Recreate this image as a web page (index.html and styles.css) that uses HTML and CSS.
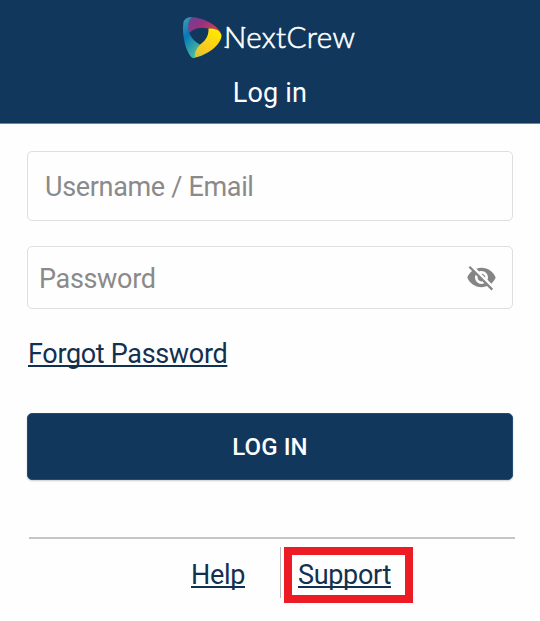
FILE: index.html
```html
<!DOCTYPE html>
<html lang="en">
<head>
<meta charset="utf-8">
<title>NextCrew</title>
<link rel="stylesheet" href="styles.css">
</head>
<body>
<header class="header">
  <div class="brand">
    <svg class="mark" viewBox="0 0 39 42" width="39" height="42">
      <defs>
        <linearGradient id="blue" x1="0" y1="0" x2="0.5" y2="1"><stop offset="0" stop-color="#4a9db0"/><stop offset=".45" stop-color="#0878b8"/><stop offset="1" stop-color="#45b8a0"/></linearGradient>
        <linearGradient id="pink" x1="0" y1="0" x2="1" y2="0.5"><stop offset="0" stop-color="#5d4a92"/><stop offset=".5" stop-color="#983082"/><stop offset="1" stop-color="#d0404c"/></linearGradient>
        <linearGradient id="gold" x1="0" y1="1" x2="0.6" y2="0"><stop offset="0" stop-color="#b9cc42"/><stop offset=".4" stop-color="#f9c821"/><stop offset="1" stop-color="#ffe600"/></linearGradient>
      </defs>
      <path fill="url(#pink)" d="M6 .5C15-1 33 6 38 16C34 12 30 11.500 25.500 11.500C18 10 11 11 6.500 16C4 11 3 4 6 .5Z"/>
      <path fill="url(#gold)" d="M25.500 11.500C32 11 37 13 38.500 18C39 27 24 39 10 41C11 36 13 31 16.500 28C21 25 26 20 25.500 11.500Z"/>
      <path fill="url(#blue)" d="M9 .2C5 3 4.500 9 6 15C8 21 12 25 17 27.500C13 31 11 37 12 40.800C9.500 42 8 40 6 37C1 29-1 14 .5 5C2 1 5 0 9 .2Z"/>
    </svg>
    <span class="wordmark">NextCrew</span>
    <svg class="strokes" viewBox="0 0 136 42" width="136" height="42"><path d="M2.500 30.300H6M20 10.800H23.500" fill="none" stroke="#fff" stroke-width="1.600"/></svg>
  </div>
  <h1 class="title">Log in</h1>
</header>
<main class="form">
  <div class="field user"><span class="user-text">Username / Email</span></div>
  <div class="field pass"><span class="pass-text">Password</span>
    <svg class="eye" viewBox="0 0 24 24" width="31" height="31"><path fill="#858585" d="M12 7c2.760 0 5 2.240 5 5 0 .65-.13 1.260-.36 1.830l2.920 2.920c1.510-1.260 2.700-2.890 3.430-4.750-1.730-4.390-6-7.500-11-7.500-1.400 0-2.740.25-3.980.7l2.160 2.160C10.740 7.130 11.350 7 12 7zM2 4.270l2.280 2.280.46.46C3.080 8.300 1.780 10.020 1 12c1.730 4.390 6 7.500 11 7.500 1.550 0 3.030-.3 4.380-.84l.42.42L19.730 22 21 20.730 3.270 3 2 4.270zM7.530 9.800l1.550 1.550c-.05.21-.08.43-.08.65 0 1.660 1.340 3 3 3 .22 0 .44-.03.65-.08l1.550 1.550c-.67.33-1.410.53-2.200.53-2.760 0-5-2.240-5-5 0-.79.2-1.530.53-2.200zm4.310-.78l3.150 3.150.02-.16c0-1.660-1.340-3-3-3l-.17.01z"/></svg>
  </div>
  <a class="link forgot">Forgot Password</a>
  <button class="login">LOG IN</button>
  <footer class="footer">
    <div class="help"><a class="link">Help</a></div>
    <div class="support"><a class="link">Support</a></div>
  </footer>
</main>
</body>
</html>
```
FILE: styles.css
```css
* { box-sizing: border-box; }
body { margin: 0; background: #fefefe; font-family: Roboto, sans-serif; font-size: 27px; letter-spacing: -.33px; }
.header { height: 124px; background: #11375d; border-bottom: 1px solid #6f879d; color: #fff; padding-top: 17px; }
.brand { position: relative; display: flex; height: 42px; margin-left: 183px; }
.wordmark { font: 300 29.5px/39px Lato, sans-serif; -webkit-text-stroke: .6px #fff; margin-left: 2px; letter-spacing: .4px; }
.strokes { position: absolute; left: 39px; top: 0; }
.title { margin: 18px 0 0; font-size: 27px; line-height: 32px; font-weight: 400; text-align: center; letter-spacing: .2px; }
.form { padding: 27px 27px 0; }
.field { display: flex; align-items: center; border: 1px solid #dedede; border-radius: 5px; color: #8a8a8a; width: 486px; }
.user { height: 70px; padding: 2px 0 0 17px; }
.pass { height: 63px; margin-top: 25px; padding: 0 15px 0 11px; justify-content: space-between; }
.pass-text { padding-top: 2px; }
.link { color: #12304f; text-decoration: underline; text-decoration-thickness: 1.5px; text-underline-offset: 2px; text-decoration-skip-ink: none; }
.forgot { display: block; margin: 29px 0 0 1px; line-height: 32px; width: max-content; }
.login { display: block; width: 486px; height: 67px; margin-top: 43px; padding: 0; border: 1px solid #264b70; border-radius: 5px; background: #11375d; color: #fff; font: 500 24px Roboto, sans-serif; letter-spacing: .1px; box-shadow: 0 1px 2px #0003; }
.footer { display: flex; width: 486px; margin: 57px 0 0 2px; border-top: 2px solid #c6c6c6; padding-top: 8px; }
.help { width: 252px; height: 51px; border-right: 1px solid #bbb; padding: 12px 0 0 162px; line-height: 32px; }
.support { width: 129px; height: 56px; margin-left: 3px; border: 8px solid #ed1c24; padding: 4px 0 0 6px; line-height: 32px; }
```
